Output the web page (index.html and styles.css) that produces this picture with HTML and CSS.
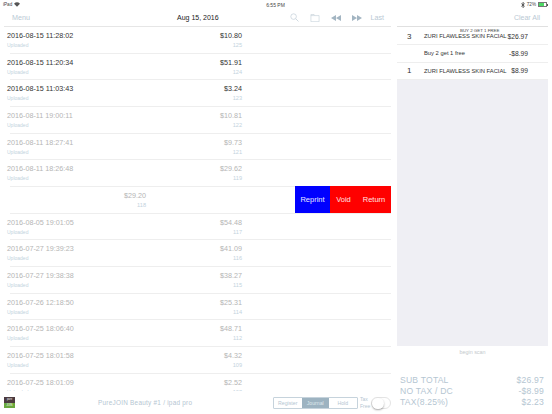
FILE: index.html
```html
<!DOCTYPE html>
<html lang="en">
<head>
    <meta charset="UTF-8">
    <meta name="viewport" content="width=device-width, initial-scale=1.0">
    <title>Journal</title>
    <link rel="stylesheet" href="styles.css">
</head>
<body>
    <div class="status-bar">
        <div class="status-left">
            <span>iPad</span>
            <svg class="wifi" width="6" height="5" viewBox="0 0 7 5"><path d="M0 1.6 A5 5 0 0 1 7 1.6 L3.5 5 Z" fill="#555"/></svg>
        </div>
        <span class="status-time">6:55 PM</span>
        <div class="status-right">
            <svg width="4" height="6" viewBox="0 0 4 6"><path d="M0.3 1.5 L3.4 4.3 L1.9 5.6 V0.4 L3.4 1.7 L0.3 4.5" fill="none" stroke="#333" stroke-width="0.7"/></svg>
            <span>72%</span>
            <span class="battery"><span class="battery-level"></span></span>
            <span class="battery-nub"></span>
        </div>
    </div>

    <div class="content">
        <div class="journal">
            <header class="top-bar">
                <a class="top-link menu-link">Menu</a>
                <h1 class="top-date">Aug 15, 2016</h1>
                <div class="top-tools">
                    <svg width="9" height="9" viewBox="0 0 10 10"><circle cx="4" cy="4" r="3.1" fill="none" stroke="#c3d0d9" stroke-width="0.8"/><path d="M6.3 6.3 L9.4 9.4" stroke="#c3d0d9" stroke-width="0.9"/></svg>
                    <svg width="10" height="8" viewBox="0 0 10 9"><path d="M0.4 8.6 V0.6 H4 L4.6 1.8 H9.6 V8.6 Z M0.4 1.8 H4.6" fill="none" stroke="#c3d0d9" stroke-width="0.7"/></svg>
                    <svg width="10" height="6" viewBox="0 0 10 6"><path d="M5 0 V6 L0 3 Z M10 0 V6 L5 3 Z" fill="#a3b5c2"/></svg>
                    <svg class="tool-next" width="10" height="6" viewBox="0 0 10 6"><path d="M0 0 V6 L5 3 Z M5 0 V6 L10 3 Z" fill="#a3b5c2"/></svg>
                    <a class="top-link">Last</a>
                </div>
            </header>

            <ul class="receipt-list">
                <li class="receipt today"><div class="receipt-main"><span class="stamp">2016-08-15 11:28:02</span><span class="state">Uploaded</span></div><div class="receipt-sum"><span class="amount">$10.80</span><span class="num">125</span></div></li>
                <li class="receipt today"><div class="receipt-main"><span class="stamp">2016-08-15 11:20:34</span><span class="state">Uploaded</span></div><div class="receipt-sum"><span class="amount">$51.91</span><span class="num">124</span></div></li>
                <li class="receipt today"><div class="receipt-main"><span class="stamp">2016-08-15 11:03:43</span><span class="state">Uploaded</span></div><div class="receipt-sum"><span class="amount">$3.24</span><span class="num">123</span></div></li>
                <li class="receipt"><div class="receipt-main"><span class="stamp">2016-08-11 19:00:11</span><span class="state">Uploaded</span></div><div class="receipt-sum"><span class="amount">$10.81</span><span class="num">122</span></div></li>
                <li class="receipt"><div class="receipt-main"><span class="stamp">2016-08-11 18:27:41</span><span class="state">Uploaded</span></div><div class="receipt-sum"><span class="amount">$9.73</span><span class="num">121</span></div></li>
                <li class="receipt"><div class="receipt-main"><span class="stamp">2016-08-11 18:26:48</span><span class="state">Uploaded</span></div><div class="receipt-sum"><span class="amount">$29.62</span><span class="num">119</span></div></li>
                <li class="receipt swiped">
                    <div class="receipt-sum"><span class="amount">$29.20</span><span class="num">118</span></div>
                    <div class="swipe-actions">
                        <button class="swipe-btn reprint">Reprint</button>
                        <button class="swipe-btn void">Void</button>
                        <button class="swipe-btn return">Return</button>
                    </div>
                </li>
                <li class="receipt"><div class="receipt-main"><span class="stamp">2016-08-05 19:01:05</span><span class="state">Uploaded</span></div><div class="receipt-sum"><span class="amount">$54.48</span><span class="num">117</span></div></li>
                <li class="receipt"><div class="receipt-main"><span class="stamp">2016-07-27 19:39:23</span><span class="state">Uploaded</span></div><div class="receipt-sum"><span class="amount">$41.09</span><span class="num">116</span></div></li>
                <li class="receipt"><div class="receipt-main"><span class="stamp">2016-07-27 19:38:38</span><span class="state">Uploaded</span></div><div class="receipt-sum"><span class="amount">$38.27</span><span class="num">115</span></div></li>
                <li class="receipt"><div class="receipt-main"><span class="stamp">2016-07-26 12:18:50</span><span class="state">Uploaded</span></div><div class="receipt-sum"><span class="amount">$25.31</span><span class="num">114</span></div></li>
                <li class="receipt"><div class="receipt-main"><span class="stamp">2016-07-25 18:06:40</span><span class="state">Uploaded</span></div><div class="receipt-sum"><span class="amount">$48.71</span><span class="num">112</span></div></li>
                <li class="receipt"><div class="receipt-main"><span class="stamp">2016-07-25 18:01:58</span><span class="state">Uploaded</span></div><div class="receipt-sum"><span class="amount">$4.32</span><span class="num">109</span></div></li>
                <li class="receipt"><div class="receipt-main"><span class="stamp">2016-07-25 18:01:09</span><span class="state">Uploaded</span></div><div class="receipt-sum"><span class="amount">$2.52</span><span class="num">108</span></div></li>
            </ul>

            <footer class="bottom-bar">
                <div class="logo"><span class="logo-top">pure</span><span class="logo-bottom">JOIN</span></div>
                <span class="store-name">PureJOIN Beauty #1 / ipad pro</span>
                <div class="segments">
                    <span class="segment">Register</span>
                    <span class="segment active">Journal</span>
                    <span class="segment">Hold</span>
                </div>
                <span class="tax-label">Tax Free</span>
                <span class="toggle"><span class="toggle-knob"></span></span>
            </footer>
        </div>

        <aside class="ticket">
            <div class="ticket-head"><a class="top-link clear-link">Clear All</a></div>
            <div class="ticket-lines">
                <div class="promo-title">BUY 2 GET 1 FREE</div>
                <div class="ticket-line first"><span class="qty">3</span><span class="item">ZURI FLAWLESS SKIN FACIAL</span><span class="price">$26.97</span></div>
                <div class="ticket-line"><span class="qty"></span><span class="item">Buy 2 get 1 free</span><span class="price">-$8.99</span></div>
                <div class="ticket-line"><span class="qty">1</span><span class="item">ZURI FLAWLESS SKIN FACIAL</span><span class="price">$8.99</span></div>
            </div>
            <div class="ticket-empty"></div>
            <div class="scan-hint">begin scan</div>
            <div class="totals">
                <div class="total-row"><span>SUB TOTAL</span><span>$26.97</span></div>
                <div class="total-row"><span>NO TAX / DC</span><span>-$8.99</span></div>
                <div class="total-row"><span>TAX(8.25%)</span><span>$2.23</span></div>
            </div>
        </aside>
    </div>
</body>
</html>
```
FILE: styles.css
```css
html, body {
    margin: 0;
    padding: 0;
    height: 100%;
}

body {
    width: 552px;
    height: 414px;
    overflow: hidden;
    background: #fff;
    font-family: "Liberation Sans", Arial, sans-serif;
    color: #333;
    display: flex;
    flex-direction: column;
}

.status-bar {
    height: 10px;
    display: grid;
    grid-template-columns: 1fr auto 1fr;
    align-items: center;
    padding: 0 4px 1px 3px;
    box-sizing: border-box;
    font-size: 4.6px;
    color: #444;
}

.status-left {
    display: flex;
    align-items: center;
    gap: 2px;
}

.status-time {
    font-size: 5px;
}

.status-right {
    display: flex;
    align-items: center;
    justify-content: flex-end;
    gap: 1.5px;
}

.battery {
    width: 9px;
    height: 5px;
    border: 0.5px solid #777;
    box-sizing: border-box;
    display: block;
}

.battery-level {
    display: block;
    width: 72%;
    height: 100%;
    background: #4cd964;
}

.battery-nub {
    width: 1px;
    height: 2px;
    margin-left: -1px;
    background: #555;
}

.content {
    flex: 1;
    display: flex;
    min-height: 0;
}

.journal {
    width: 391px;
    display: flex;
    flex-direction: column;
}

.top-bar {
    height: 15px;
    margin-left: 4px;
    padding: 0 7px 1px 8px;
    border-bottom: 1px solid #e6e6e6;
    position: relative;
    display: flex;
    align-items: center;
    justify-content: space-between;
}

.top-link {
    font-size: 7.2px;
    color: #b9c9d4;
}

.top-date {
    margin: 0;
    position: absolute;
    left: 173px;
    font-size: 7px;
    font-weight: normal;
    color: #222;
}

.top-tools {
    display: flex;
    align-items: center;
    gap: 11px;
}

.tool-next {
    margin-right: -3px;
}

.receipt-list {
    list-style: none;
    margin: 0;
    padding: 0;
    flex: 1;
    overflow: hidden;
    min-height: 0;
}

.receipt {
    height: 26.67px;
    box-sizing: border-box;
    margin-left: 10px;
    border-bottom: 1px solid #eee;
    display: flex;
    justify-content: space-between;
    padding-right: 149px;
    color: #b5b5b5;
}

.receipt.today {
    color: #333;
}

.receipt-main {
    margin-left: -3px;
    display: flex;
    flex-direction: column;
}

.receipt-sum {
    display: flex;
    flex-direction: column;
    align-items: flex-end;
}

.stamp, .amount {
    font-size: 7.2px;
    line-height: 10px;
    margin-top: 4px;
}

.state, .num {
    font-size: 5px;
    line-height: 9px;
    color: #c3d3dd;
}

.num {
    font-size: 5.6px;
}

.receipt.swiped {
    padding-right: 0;
    justify-content: flex-start;
    position: relative;
}

.receipt.swiped .receipt-sum {
    margin-left: 136px;
    width: 0;
}

.swipe-actions {
    position: absolute;
    top: -1px;
    right: 0;
    bottom: 0;
    display: flex;
}

.swipe-btn {
    height: 100%;
    border: none;
    padding: 0;
    font-family: inherit;
    font-size: 7.5px;
    color: #e8e8ff;
}

.swipe-btn.reprint {
    width: 35px;
    background: #0000ff;
}

.swipe-btn.void {
    width: 27px;
    background: #ff0000;
    color: #ffe0e0;
}

.swipe-btn.return {
    width: 34px;
    background: #ff0000;
    color: #ffe0e0;
}

.bottom-bar {
    height: 23px;
    display: flex;
    align-items: center;
    position: relative;
    padding-left: 4px;
}

.logo {
    width: 11px;
    height: 11px;
    display: flex;
    flex-direction: column;
    font-size: 2.6px;
    line-height: 5.5px;
    text-align: center;
    color: #fff;
}

.logo-top {
    flex: 1;
    background: #4b3a3f;
}

.logo-bottom {
    flex: 1;
    background: #6aa83e;
}

.store-name {
    position: absolute;
    left: 98px;
    font-size: 6.4px;
    letter-spacing: 0.25px;
    color: #b5c6d2;
}

.segments {
    position: absolute;
    left: 273px;
    display: flex;
    border: 1px solid #c6d3dc;
    border-radius: 1px;
    height: 10px;
}

.segment {
    width: 27.5px;
    text-align: center;
    font-size: 5.2px;
    line-height: 10px;
    color: #b5c6d2;
}

.segment.active {
    background: #9db3c1;
    color: #dfe8ed;
}

.tax-label {
    position: absolute;
    left: 360px;
    width: 12px;
    font-size: 5px;
    line-height: 7px;
    color: #b5c6d2;
}

.toggle {
    position: absolute;
    left: 371px;
    width: 20px;
    height: 12px;
    border: 0.5px solid #e4e4e4;
    border-radius: 7px;
    box-sizing: border-box;
}

.toggle-knob {
    display: block;
    width: 11.5px;
    height: 11.5px;
    border-radius: 50%;
    background: #fff;
    box-shadow: 0 1px 2px rgba(0, 0, 0, 0.35);
}

.ticket {
    width: 151px;
    margin-left: 6px;
    display: flex;
    flex-direction: column;
}

.ticket-head {
    height: 15px;
    padding: 0 8px 1px 0;
    border-bottom: 1px solid #e0e0e0;
    display: flex;
    align-items: center;
    justify-content: flex-end;
}

.clear-link {
    font-size: 7px;
}

.ticket-lines {
    position: relative;
}

.promo-title {
    position: absolute;
    top: 1px;
    left: 63px;
    font-size: 4.4px;
    line-height: 5px;
    color: #444;
}

.ticket-line {
    height: 17.5px;
    border-bottom: 1px solid #eee;
    box-sizing: border-box;
    display: flex;
    align-items: center;
    color: #333;
}

.ticket-line.first {
    height: 18px;
    padding-top: 1px;
}

.qty {
    width: 27px;
    padding-left: 10px;
    box-sizing: border-box;
    font-size: 8px;
}

.item {
    width: 82px;
    white-space: nowrap;
    font-size: 5.8px;
}

.price {
    flex: 1;
    text-align: right;
    padding-right: 20px;
    font-size: 6.7px;
}

.ticket-empty {
    flex: 1;
    background: #efeff4;
}

.scan-hint {
    height: 14px;
    line-height: 13px;
    text-align: center;
    font-size: 5.4px;
    color: #c4c9cd;
}

.totals {
    height: 54px;
    padding: 14.5px 4px 0 3px;
    box-sizing: border-box;
}

.total-row {
    display: flex;
    justify-content: space-between;
    font-size: 8.6px;
    line-height: 11.3px;
    color: #b5c6d2;
    letter-spacing: 0.2px;
}
```
